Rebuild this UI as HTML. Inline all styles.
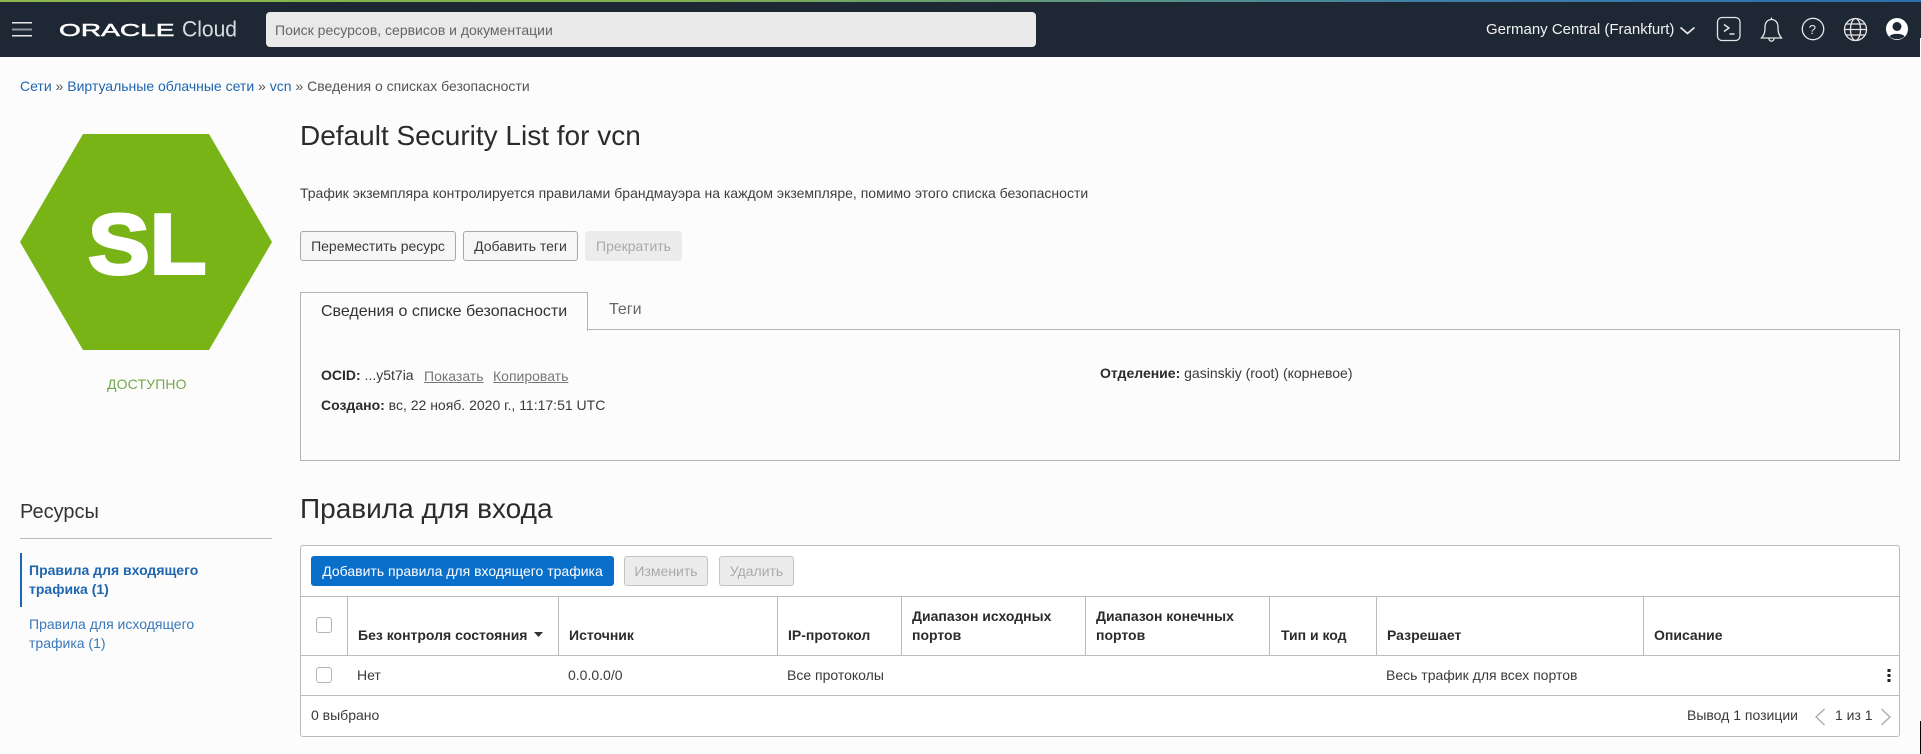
<!DOCTYPE html>
<html lang="ru"><head><meta charset="utf-8"><title>Default Security List for vcn</title>
<style>
html,body{margin:0;padding:0}
body{width:1921px;height:754px;overflow:hidden;position:relative;background:#fcfcfc;font-family:"Liberation Sans",Arial,sans-serif;font-size:14px;color:#3a3a3a}
.t{position:absolute;white-space:nowrap;line-height:20px;height:20px}
.b{position:absolute;box-sizing:border-box;height:30px;line-height:28px;text-align:center;border:1px solid #a9a9a9;border-radius:3px;background:#f6f6f6;color:#3a3a3a;white-space:nowrap}
.d{background:#ececec;border-color:#c4c4c4;color:#a9a9a9}
.l{position:absolute;background:#bcbcbc}
.h{font-weight:bold;color:#2b2b2b}
.cb{position:absolute;box-sizing:border-box;left:316px;width:16px;height:16px;border:1px solid #b5b5b5;border-radius:3px;background:#fff}
a{color:#1f66b0;text-decoration:none}
</style></head><body>
<div style="position:absolute;left:0;top:0;width:1921px;height:57px;background:#1e2834"></div>
<div style="position:absolute;left:0;top:0;width:1921px;height:2px;background:linear-gradient(90deg,#8cb84a 0,#7fb04f 35%,#3f7fa8 75%,#2a6fae 100%)"></div>
<svg style="position:absolute;left:0;top:0" width="250" height="57">
<rect x="12" y="22" width="20" height="1.5" fill="#e8e8e8"/><rect x="12" y="28.5" width="20" height="2" fill="#8d949c"/><rect x="12" y="35" width="20" height="1.5" fill="#e8e8e8"/>
<text transform="translate(59 36) scale(1.56 1)" font-family="Liberation Sans" font-size="18" fill="#fff" stroke="#fff" stroke-width=".5">ORACLE</text>
<text x="182" y="36.500" font-family="Liberation Sans" font-size="22" fill="#d9dce0" textLength="55" lengthAdjust="spacingAndGlyphs">Cloud</text>
</svg>
<div style="position:absolute;left:266px;top:12px;width:770px;height:35px;background:#e9e9e9;border-radius:4px"></div>
<div class="t" style="left:275px;top:20px;color:#666">Поиск ресурсов, сервисов и документации</div>
<div class="t" style="left:1486px;top:20px;font-size:15px;color:#f2f2f2">Germany Central (Frankfurt)</div>
<svg style="position:absolute;left:1675px;top:10px" width="246" height="40" fill="none" stroke="#e6e6e6" stroke-width="1.3">
<path d="M5.5 17.5l7 6 7-6" stroke-width="1.8"/>
<rect x="42.5" y="7.5" width="22.5" height="23" rx="4.5"/><path d="M49 14.5l5 3.5-5 3.5M54.5 24h5" stroke-width="1.4"/>
<path d="M86.5 28c3-3.5 3.5-6 3.5-11 0-4.5 2.700-7.500 6.500-7.500s6.500 3 6.500 7.500c0 5 .5 7.500 3.500 11zM94 28.500c0 3.500 5 3.500 5 0M96.500 9.500V7.500"/>
<circle cx="138" cy="19" r="10.700"/><text x="133.800" y="24" font-family="Liberation Sans" font-size="13" fill="#e6e6e6" stroke="none">?</text>
<circle cx="180.500" cy="19.500" r="11"/><ellipse cx="180.500" cy="19.500" rx="5" ry="11"/><path d="M169.500 19.500h22M171 14h19M171 25h19"/>
<circle cx="222" cy="19" r="11" fill="#fff" stroke="none"/><circle cx="222" cy="16.500" r="4.500" fill="#1e2834" stroke="none"/><path d="M214.500 26.500c1.500-3.500 13.500-3.500 15 0-3.500 3.500-11.500 3.500-15 0z" fill="#1e2834" stroke="none"/>
</svg>

<div class="t" style="left:20px;top:76px;color:#555"><a href="#">Сети</a> » <a href="#">Виртуальные облачные сети</a> » <a href="#">vcn</a> » Сведения о списках безопасности</div>

<svg style="position:absolute;left:0;top:110px" width="300" height="260">
<polygon points="83,24 209,24 272,132 209,240 83,240 20,132" fill="#79b417"/>
<text transform="translate(88 163.500) scale(1.09 1)" font-family="Liberation Sans" font-weight="bold" font-size="85" fill="#fff" stroke="#fff" stroke-width="3">SL</text>
</svg>
<div class="t" style="left:107px;top:374px;color:#74a84c;letter-spacing:.15px">ДОСТУПНО</div>

<div class="t" style="left:300px;top:120px;font-size:28px;line-height:32px;height:32px;color:#2b2b2b">Default Security List for vcn</div>
<div class="t" style="left:300px;top:183px;color:#3f3f3f">Трафик экземпляра контролируется правилами брандмауэра на каждом экземпляре, помимо этого списка безопасности</div>
<div class="b" style="left:300px;top:231px;width:156px">Переместить ресурс</div>
<div class="b" style="left:463px;top:231px;width:115px">Добавить теги</div>
<div class="b d" style="left:585px;top:231px;width:97px;border-color:#ececec">Прекратить</div>

<div style="position:absolute;box-sizing:border-box;left:300px;top:329px;width:1600px;height:132px;border:1px solid #b4b4b4"></div>
<div style="position:absolute;box-sizing:border-box;left:300px;top:292px;width:288px;height:39px;border:1px solid #b4b4b4;border-bottom:0;background:#fcfcfc"></div>
<div class="t" style="left:321px;top:302px;font-size:16px;color:#333">Сведения о списке безопасности</div>
<div class="t" style="left:609px;top:300px;font-size:16px;color:#666">Теги</div>

<div class="t" style="left:321px;top:365px"><b class="h">OCID:</b> ...y5t7ia</div>
<div class="t" style="left:424px;top:366px;color:#777;text-decoration:underline">Показать</div>
<div class="t" style="left:493px;top:366px;color:#777;text-decoration:underline">Копировать</div>
<div class="t" style="left:321px;top:395px"><b class="h">Создано:</b> вс, 22 нояб. 2020 г., 11:17:51 UTC</div>
<div class="t" style="left:1100px;top:363px"><b class="h">Отделение:</b> gasinskiy (root) (корневое)</div>

<div class="t" style="left:20px;top:501px;font-size:20px;line-height:22px;height:22px;color:#333">Ресурсы</div>
<div class="l" style="left:20px;top:538px;width:252px;height:1px"></div>
<div style="position:absolute;left:20px;top:553px;width:2px;height:54px;background:#1f66b0"></div>
<div class="t" style="left:29px;top:561px;line-height:19px;font-weight:bold;color:#1f66b0">Правила для входящего<br>трафика (1)</div>
<div class="t" style="left:29px;top:615px;line-height:19px;color:#3a78b8">Правила для исходящего<br>трафика (1)</div>

<div class="t" style="left:300px;top:491px;font-size:28px;line-height:36px;height:36px;color:#2b2b2b">Правила для входа</div>

<div style="position:absolute;box-sizing:border-box;left:300px;top:545px;width:1600px;height:192px;border:1px solid #bcbcbc;border-radius:3px;background:#fff"></div>
<div class="b" style="left:311px;top:556px;width:303px;background:#0a6fcb;border-color:#0a6fcb;color:#fff">Добавить правила для входящего трафика</div>
<div class="b d" style="left:624px;top:556px;width:84px">Изменить</div>
<div class="b d" style="left:719px;top:556px;width:75px">Удалить</div>

<div class="l" style="left:301px;top:596px;width:1598px;height:1px"></div>
<div class="l" style="left:301px;top:655px;width:1598px;height:1px"></div>
<div class="l" style="left:301px;top:695px;width:1598px;height:1px"></div>
<div class="l" style="left:347px;top:596px;width:1px;height:59px"></div>
<div class="l" style="left:558px;top:596px;width:1px;height:59px"></div>
<div class="l" style="left:777px;top:596px;width:1px;height:59px"></div>
<div class="l" style="left:901px;top:596px;width:1px;height:59px"></div>
<div class="l" style="left:1085px;top:596px;width:1px;height:59px"></div>
<div class="l" style="left:1269px;top:596px;width:1px;height:59px"></div>
<div class="l" style="left:1376px;top:596px;width:1px;height:59px"></div>
<div class="l" style="left:1643px;top:596px;width:1px;height:59px"></div>
<div class="cb" style="top:617px"></div><div class="cb" style="top:667px"></div>

<div class="t h" style="left:358px;top:625px">Без контроля состояния</div>
<svg style="position:absolute;left:534px;top:632px" width="9" height="6"><path d="M0 0h9L4.500 5z" fill="#333"/></svg>
<div class="t h" style="left:569px;top:625px">Источник</div>
<div class="t h" style="left:788px;top:625px">IP-протокол</div>
<div class="t h" style="left:912px;top:607px;line-height:19px">Диапазон исходных<br>портов</div>
<div class="t h" style="left:1096px;top:607px;line-height:19px">Диапазон конечных<br>портов</div>
<div class="t h" style="left:1281px;top:625px">Тип и код</div>
<div class="t h" style="left:1387px;top:625px">Разрешает</div>
<div class="t h" style="left:1654px;top:625px">Описание</div>

<div class="t" style="left:357px;top:665px">Нет</div>
<div class="t" style="left:568px;top:665px">0.0.0.0/0</div>
<div class="t" style="left:787px;top:665px">Все протоколы</div>
<div class="t" style="left:1386px;top:665px">Весь трафик для всех портов</div>
<svg style="position:absolute;left:1887px;top:668px" width="4" height="15"><rect x=".5" y="1" width="3" height="3" fill="#222"/><rect x=".5" y="6" width="3" height="3" fill="#222"/><rect x=".5" y="11" width="3" height="3" fill="#222"/></svg>

<div class="t" style="left:311px;top:705px">0 выбрано</div>
<div class="t" style="left:1687px;top:705px">Вывод 1 позиции</div>
<div class="t" style="left:1835px;top:705px">1 из 1</div>
<svg style="position:absolute;left:1814px;top:708px" width="78" height="18" fill="none" stroke="#aaa" stroke-width="1.300"><path d="M10.500 1L2 9l8.500 8M67.500 1L76 9l-8.500 8"/></svg>

<div style="position:absolute;left:1920px;top:721px;width:1px;height:33px;background:#000"></div>
<div style="position:absolute;left:1920px;top:38px;width:1px;height:19px;background:#fff"></div>
</body></html>
